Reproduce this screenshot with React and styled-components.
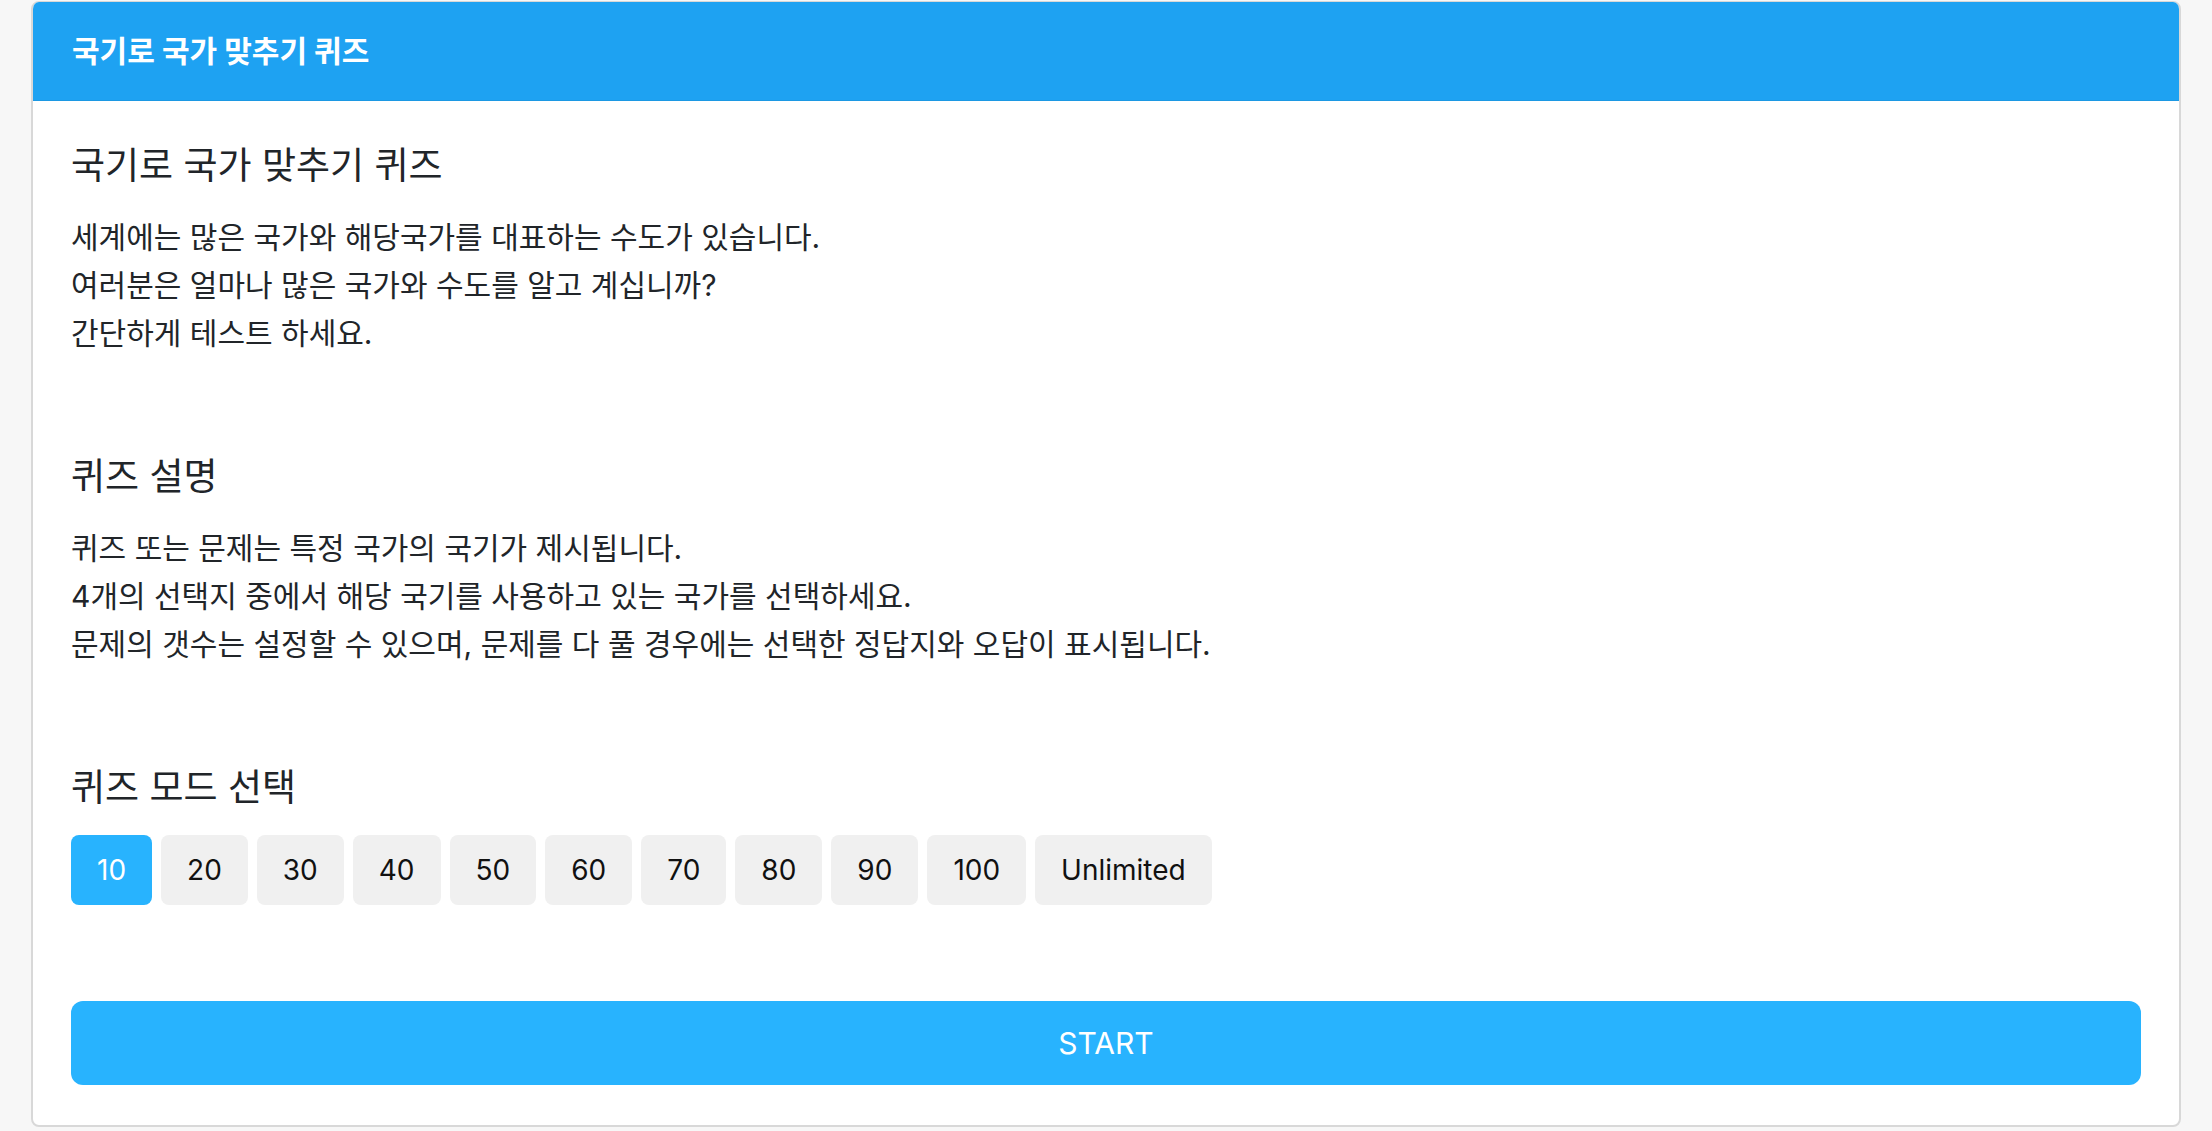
import React, { useState } from 'react';
import styled, { createGlobalStyle } from 'styled-components';

const GlobalStyle = createGlobalStyle`
  body {
    margin: 0;
    background-color: #f7f7f7;
    font-family: Inter, "Noto Sans CJK KR", sans-serif;
    color: #212529;
  }
`;

const Page = styled.main`
  padding: 1px 31px 0;
`;

const Card = styled.section`
  background-color: #fff;
  border: solid 2px #d8d8d8;
  border-top-width: 1px;
  border-radius: 8px;
  overflow: hidden;
`;

const CardHeader = styled.header`
  display: flex;
  align-items: center;
  height: 99px;
  padding: 0 39px 5px;
  box-sizing: border-box;
  background-color: #1ea2f2;
  border-bottom: solid 1px rgba(0, 0, 0, 0.06);
  color: #fff;
  font-size: 30px;
  font-weight: 700;
`;

const CardBody = styled.div`
  padding: 41px 38px 40px;
`;

const Title = styled.h2`
  margin: 0 0 23px;
  font-size: 37px;
  font-weight: 400;
  line-height: 48px;
`;

const Text = styled.p`
  margin: 0 0 96px;
  font-size: 30px;
  line-height: 48px;
`;

const ModeList = styled.div`
  display: flex;
  gap: 9px;
  margin-top: 11px;
`;

const ModeButton = styled.button`
  height: 70px;
  padding: 0 26px;
  border: none;
  border-radius: 8px;
  background-color: ${({ active }) => (active ? '#28b3fe' : '#f0f0f0')};
  color: ${({ active }) => (active ? '#fff' : '#111')};
  font-family: Inter, sans-serif;
  font-size: 28px;
  cursor: pointer;
`;

const StartButton = styled.button`
  display: block;
  width: 100%;
  height: 84px;
  margin-top: 96px;
  border: none;
  border-radius: 12px;
  background-color: #28b3fe;
  color: #fff;
  font-family: Inter, sans-serif;
  font-size: 30px;
  cursor: pointer;
`;

const modes = ['10', '20', '30', '40', '50', '60', '70', '80', '90', '100', 'Unlimited'];

function App() {
  const [mode, setMode] = useState('10');

  return (
    <Page>
      <GlobalStyle />
      <Card>
        <CardHeader>국기로 국가 맞추기 퀴즈</CardHeader>
        <CardBody>
          <Title>국기로 국가 맞추기 퀴즈</Title>
          <Text>
            세계에는 많은 국가와 해당국가를 대표하는 수도가 있습니다.
            <br />
            여러분은 얼마나 많은 국가와 수도를 알고 계십니까?
            <br />
            간단하게 테스트 하세요.
          </Text>

          <Title>퀴즈 설명</Title>
          <Text>
            퀴즈 또는 문제는 특정 국가의 국기가 제시됩니다.
            <br />
            4개의 선택지 중에서 해당 국기를 사용하고 있는 국가를 선택하세요.
            <br />
            문제의 갯수는 설정할 수 있으며, 문제를 다 풀 경우에는 선택한 정답지와 오답이 표시됩니다.
          </Text>

          <Title>퀴즈 모드 선택</Title>
          <ModeList>
            {modes.map((m) => (
              <ModeButton key={m} active={m === mode} onClick={() => setMode(m)}>
                {m}
              </ModeButton>
            ))}
          </ModeList>

          <StartButton>START</StartButton>
        </CardBody>
      </Card>
    </Page>
  );
}

export default App;
